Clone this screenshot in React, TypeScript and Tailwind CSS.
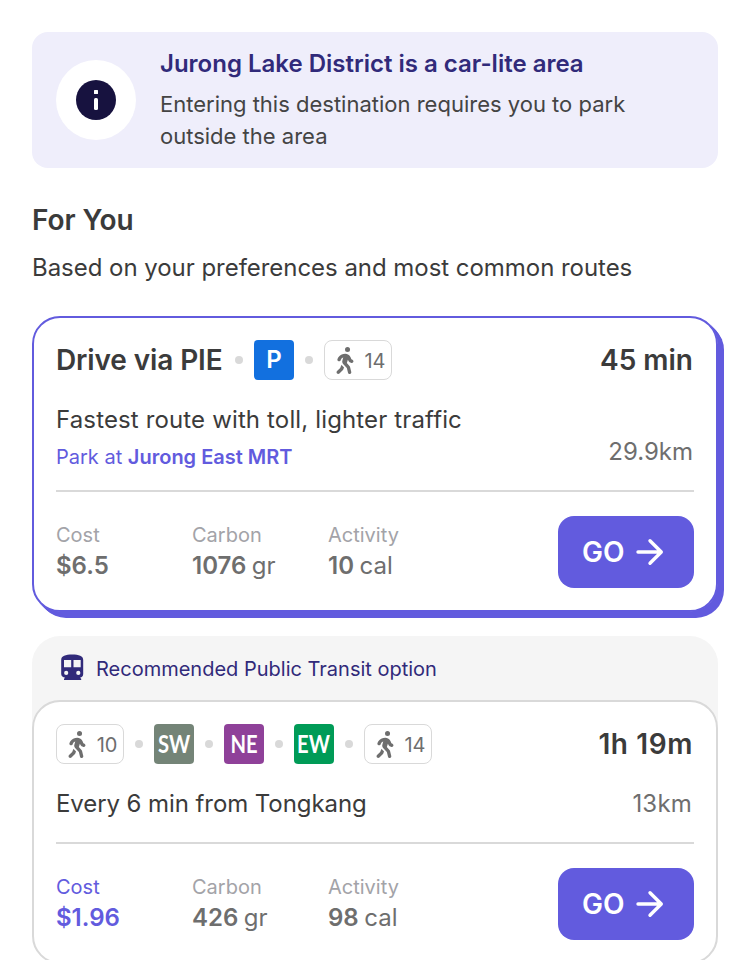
import React from 'react';
import { FaPersonWalking } from 'react-icons/fa6';

interface Stat {
  label: string;
  value: string;
  unit?: string;
  highlight?: boolean;
}

const driveStats: Stat[] = [
  { label: 'Cost', value: '$6.5' },
  { label: 'Carbon', value: '1076', unit: 'gr' },
  { label: 'Activity', value: '10', unit: 'cal' }
];

const transitStats: Stat[] = [
  { label: 'Cost', value: '$1.96', highlight: true },
  { label: 'Carbon', value: '426', unit: 'gr' },
  { label: 'Activity', value: '98', unit: 'cal' }
];

const TrainIcon = () => (
  <svg viewBox="0 0 32 32" className="mr-2 size-8">
    <path
      fill="#312a7a"
      fillRule="evenodd"
      d="M5.200 8C5.200 4 9.500 2.600 16.200 2.600S27.200 4 27.200 8V22c0 2-1.300 3.400-3.200 3.800l1.200 1V28H8v-1.200l1.200-1C7 25.400 5.200 24 5.200 22zM8 8v7.200h7.200V8zM17.500 8v7.200h7.200V8zM10.200 18.800a2.100 2.100 0 1 0 0 4.200 2.100 2.100 0 0 0 0-4.200zM22.300 18.800a2.100 2.100 0 1 0 0 4.200 2.100 2.100 0 0 0 0-4.200z"
    />
  </svg>
);

const Dot = () => <span className="mx-[11px] size-2 shrink-0 rounded-full bg-[#d9d9d9]" />;

const WalkBadge = ({ minutes }: { minutes: number }) => (
  <span className="flex h-10 w-[68px] items-center justify-between rounded-lg border border-[#d9d9d9] pr-[5.5px] pl-[11px] text-xl text-[#6e6e6e]">
    <FaPersonWalking className="h-[27px] w-[18px]" />
    <span className="pt-px">{minutes}</span>
  </span>
);

const LineBadge = ({ name, color }: { name: string; color: string }) => (
  <span className={`flex size-10 items-center justify-center rounded-[4px] pb-px font-['Lato',sans-serif] text-2xl font-bold text-white ${color}`}>
    <span className="scale-x-[0.84]">{name}</span>
  </span>
);

const CardFooter = ({ stats }: { stats: Stat[] }) => (
  <div className="flex h-[98px] items-end justify-between border-t-2 border-[#d9d9d9]">
    <div className="grid grid-cols-[136px_136px_136px] pb-[7px]">
      {stats.map((stat) => (
        <div key={stat.label}>
          <p className={`text-xl leading-[30px] ${stat.highlight ? 'text-[#625bde]' : 'text-[#a3a3a8]'}`}>{stat.label}</p>
          <p className={`pt-px text-2xl leading-[30px] ${stat.highlight ? 'text-[#625bde]' : 'text-[#6e6e6e]'}`}>
            <span className="font-semibold">{stat.value}</span>
            {stat.unit && <span className="ml-[5.5px]">{stat.unit}</span>}
          </p>
        </div>
      ))}
    </div>
    <button className="flex h-[72px] w-[136px] items-center rounded-2xl bg-[#625bde] pl-6 text-[28px] font-semibold text-white">
      GO
      <svg viewBox="0 0 28 28" className="ml-[11px] size-7" fill="none" stroke="white" strokeWidth="3.4" strokeLinecap="round" strokeLinejoin="round">
        <path d="M2 14h23M14 2.700L25.300 14 14 25.300" />
      </svg>
    </button>
  </div>
);

const App: React.FC = () => {
  return (
    <main className="h-[960px] w-[750px] overflow-hidden bg-white px-8 pt-8 font-['Inter',sans-serif] text-[#3b3b3b]">
      <section className="flex h-[136px] items-center rounded-2xl bg-[#efeefb] px-6">
        <div className="flex size-20 items-center justify-center rounded-full bg-white">
          <svg viewBox="0 0 40 40" className="size-10">
            <circle cx="20" cy="20" r="20" fill="#17123f" />
            <rect x="18" y="10" width="4" height="4" rx="0.5" fill="white" />
            <rect x="18" y="18" width="4" height="12" rx="1.5" fill="white" />
          </svg>
        </div>
        <div className="ml-6">
          <h2 className="mb-2 text-2xl font-semibold text-[#312a7a]">Jurong Lake District is a car-lite area</h2>
          <p className="w-[500px] text-[22px] leading-8 text-[#444]">Entering this destination requires you to park outside the area</p>
        </div>
      </section>

      <h1 className="mt-8 text-[28px] leading-10 font-semibold tracking-[-0.1px]">For You</h1>
      <p className="mt-3 text-2xl leading-8 tracking-[-0.04px]">Based on your preferences and most common routes</p>

      <section className="mt-8 h-[296px] rounded-[28px] border-2 border-[#625bde] px-[22px] pt-[22px] shadow-[1px_1px_0_#625bde,2px_2px_0_#625bde,3px_3px_0_#625bde,4px_4px_0_#625bde,5px_5px_0_#625bde,6px_6px_0_#625bde]">
        <div className="flex h-10 items-center">
          <h2 className="w-[168px] text-[28px] font-semibold tracking-[-0.12px] whitespace-nowrap">Drive via PIE</h2>
          <Dot />
          <span className="flex size-10 items-center justify-center rounded-[4px] bg-[#1270df] text-2xl font-semibold text-white">P</span>
          <Dot />
          <WalkBadge minutes={14} />
          <span className="mr-px ml-auto text-[28px] font-semibold">45 min</span>
        </div>
        <div className="mt-6 flex h-[86px] justify-between">
          <div>
            <p className="text-2xl leading-8 tracking-[0.14px]">Fastest route with toll, lighter traffic</p>
            <p className="mt-[3px] text-xl leading-9 text-[#625bde]">
              Park at <b className="font-semibold">Jurong East MRT</b>
            </p>
          </div>
          <span className="mt-8 mr-px text-2xl text-[#6e6e6e]">29.9km</span>
        </div>
        <CardFooter stats={driveStats} />
      </section>

      <section className="mt-6">
        <div className="flex h-24 items-start rounded-t-[28px] bg-[#f5f5f5] pt-4 pl-6 text-xl leading-[34px] text-[#312a7a]">
          <TrainIcon />
          Recommended Public Transit option
        </div>
        <div className="-mt-8 h-[264px] rounded-[28px] border-2 border-[#d9d9d9] bg-white px-[22px] pt-[22px]">
          <div className="flex h-10 items-center">
            <WalkBadge minutes={10} />
            <Dot />
            <LineBadge name="SW" color="bg-[#748477]" />
            <Dot />
            <LineBadge name="NE" color="bg-[#8f4199]" />
            <Dot />
            <LineBadge name="EW" color="bg-[#009b57]" />
            <Dot />
            <WalkBadge minutes={14} />
            <span className="mr-px ml-auto text-[28px] font-semibold tracking-[0.6px]">1h 19m</span>
          </div>
          <div className="mt-6 flex h-[54px] justify-between text-2xl">
            <p className="tracking-[-0.08px]">Every 6 min from Tongkang</p>
            <span className="mr-0.5 tracking-[0.2px] text-[#6e6e6e]">13km</span>
          </div>
          <CardFooter stats={transitStats} />
        </div>
      </section>
    </main>
  );
};

export default App;
